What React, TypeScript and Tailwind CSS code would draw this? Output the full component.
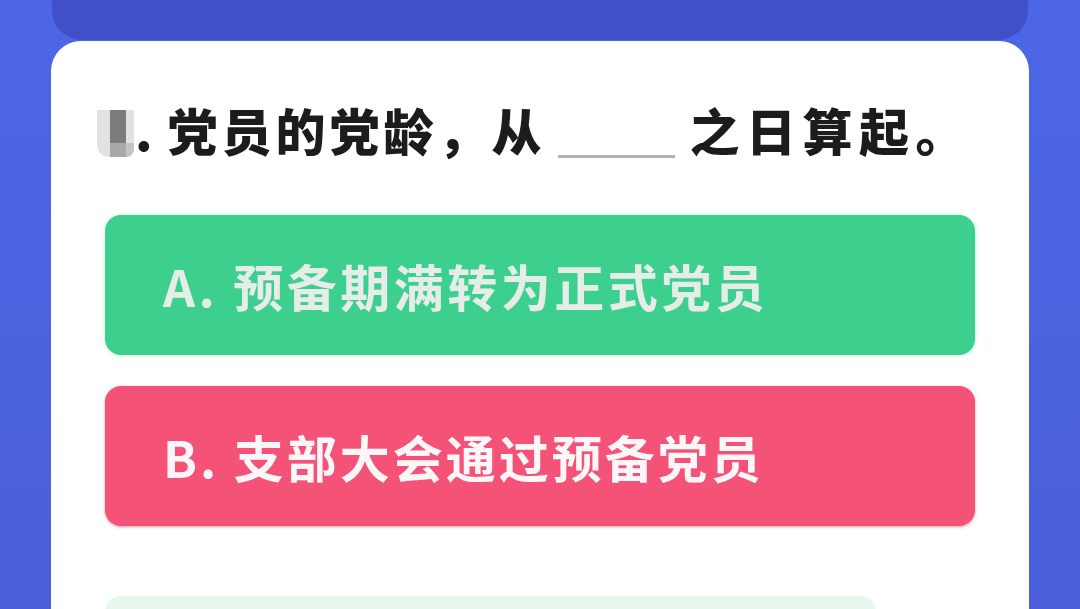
import React from "react";

export default function App() {
  const font = { fontFamily: '"Noto Sans CJK SC", "Noto Sans", sans-serif' };
  return (
    <div
      className="w-[1080px] h-[609px] overflow-hidden bg-gradient-to-b from-[#4c66e6] to-[#4a5fd9] flex flex-col items-center"
      style={font}
    >
      <div className="w-[976px] h-[40px] shrink-0 bg-[#4150c8] rounded-b-[30px]" />
      <div className="w-[978px] h-[600px] shrink-0 mt-[1px] bg-white rounded-t-[30px] px-[54px] pt-[45px]">
        <div className="flex items-end h-[76px] text-[50px] font-black text-[#1c1c1c] leading-none ml-[-8px] whitespace-nowrap">
          <span className="relative inline-block shrink-0 w-[37px] h-[47px] mb-[5px]">
            <span className="absolute left-0 top-0 w-[37px] h-[47px] bg-[#e2e2e2] rounded-bl-[12px] rounded-br-[14px]" />
            <span className="absolute left-[13px] top-0 w-[16px] h-[33px] bg-[#7c7c7c]" />
            <span className="absolute left-[13px] top-[33px] w-[16px] h-[14px] bg-[#a9a9a9]" />
            <span className="absolute left-[29px] top-[33px] w-[8px] h-[14px] bg-[#c4c4c4] rounded-br-[14px]" />
          </span>
          <span className="shrink-0 mb-[8px] ml-[1px]">.</span>
          <span className="shrink-0 ml-[15px] mb-[8px] tracking-[4px]">党员的党龄，从</span>
          <span className="inline-block shrink-0 w-[117px] h-[3px] bg-[#b0b0b0] ml-[12px] mb-[4px]" />
          <span className="shrink-0 ml-[15px] mb-[8px] tracking-[6.5px]">之日算起。</span>
        </div>
        <div className="mt-[53px] h-[140px] rounded-[16px] bg-[#3ccf8e] flex items-center pl-[58px] shadow-[0_0_4px_rgba(60,207,142,0.35)]">
          <span className="whitespace-nowrap text-[50px] font-bold text-[#e6ece8] tracking-[3.5px] leading-none">A. 预备期满转为正式党员</span>
        </div>
        <div className="mt-[31px] h-[140px] rounded-[16px] bg-[#f45277] flex items-center pl-[58px] shadow-[0_1px_3px_rgba(180,60,90,0.5)]">
          <span className="whitespace-nowrap text-[50px] font-bold text-[#fbf7f8] tracking-[3px] leading-none">B. 支部大会通过预备党员</span>
        </div>
        <div className="mt-[70px] w-[771px] h-[140px] rounded-[16px] bg-[#e6f7ec]" />
      </div>
    </div>
  );
}
